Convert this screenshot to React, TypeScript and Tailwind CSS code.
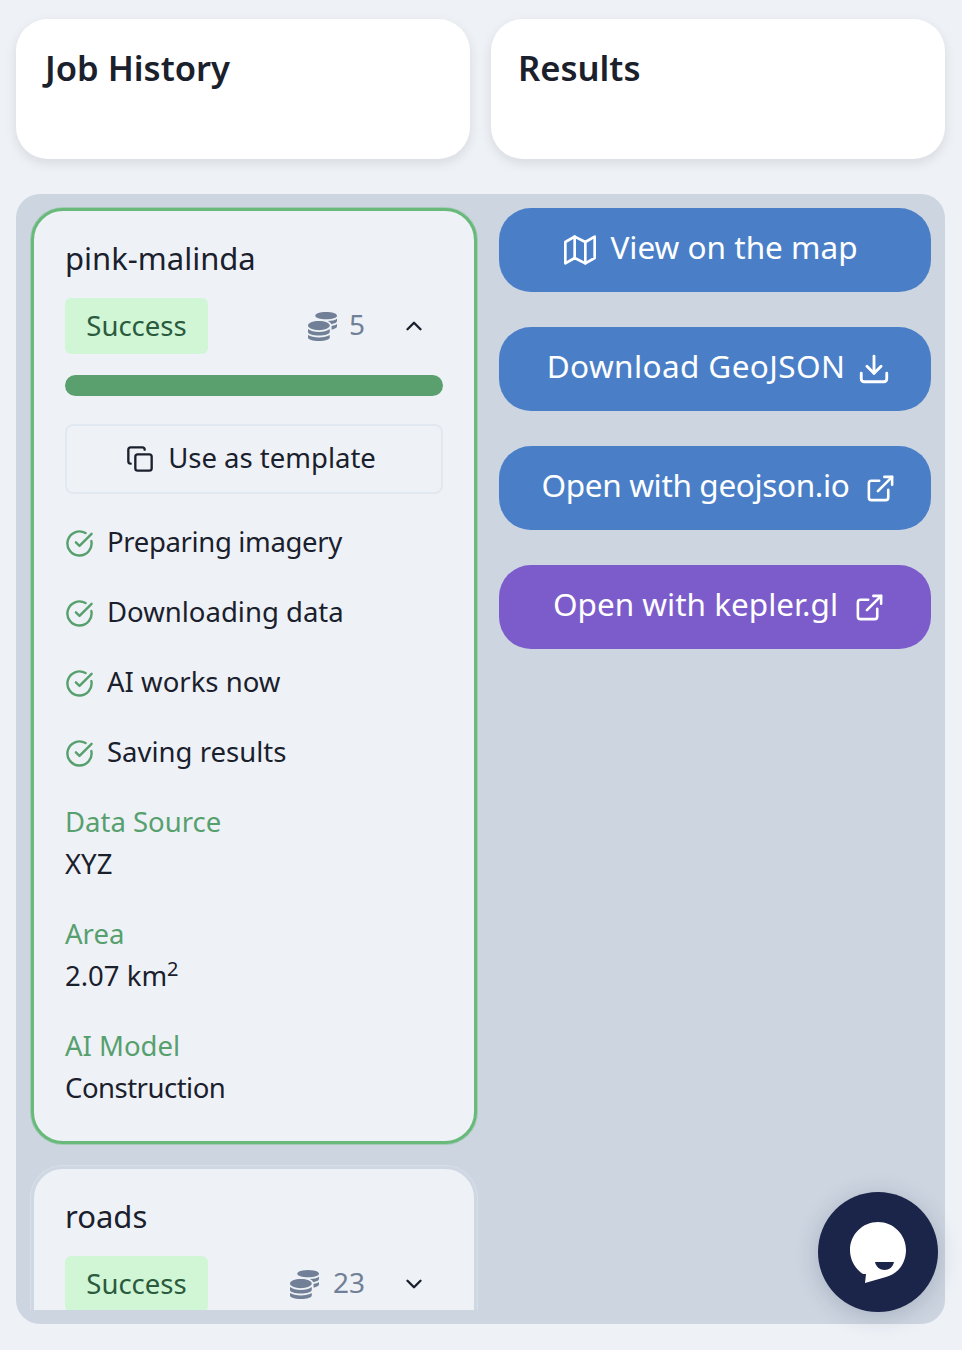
import { ChevronDown, ChevronUp, CircleCheckBig, Copy, Download, ExternalLink } from "lucide-react";
import { FaCoins } from "react-icons/fa";
import { FiMap } from "react-icons/fi";

const font = { fontFamily: '"Noto Sans", sans-serif' };

function Meta({ count, open }: { count: number; open: boolean }) {
  return (
    <div className="flex items-center justify-between">
      <span className="flex h-14 w-[143px] items-center justify-center rounded-[6px] bg-[#d0f6d6] text-[27.5px] text-[#2b5a3c]">Success</span>
      <div className="flex items-center">
        <FaCoins className="h-[29px] w-[29px] text-[#718096]" />
        <span className={`-mt-1 text-[28px] text-[#718096] ${count > 9 ? "ml-[14px]" : "ml-3"}`}>{count}</span>
        <span className="mr-[14px] ml-[34px] flex w-[30px] shrink-0 justify-center text-[#1a202c]">
          {open ? <ChevronUp size={26} strokeWidth={2.2} /> : <ChevronDown size={26} strokeWidth={2.2} />}
        </span>
      </div>
    </div>
  );
}

function Step({ label, tight }: { label: string; tight?: boolean }) {
  return (
    <div className="flex h-[70px] items-center gap-[13px]">
      <CircleCheckBig size={29} strokeWidth={2} className="text-[#57a06e]" />
      <span className={`-mt-0.5 text-[27.5px] text-[#1a202c] ${tight ? "tracking-[-0.35px]" : ""}`}>{label}</span>
    </div>
  );
}

function Info({ label, children }: { label: string; children: React.ReactNode }) {
  return (
    <div className="text-[27.5px] leading-[42px]">
      <div className="text-[#57a06e]">{label}</div>
      <div className="text-[#1a202c]">{children}</div>
    </div>
  );
}

function Action({ children, color = "bg-[#4a7fc8]", extra = "gap-3 pl-2" }: { children: React.ReactNode; color?: string; extra?: string }) {
  return (
    <button className={`flex h-[84px] w-full items-center justify-center rounded-[32px] text-[31.5px] text-white ${extra} ${color}`}>
      {children}
    </button>
  );
}

function Label({ children, className = "" }: { children: React.ReactNode; className?: string }) {
  return <span className={`-mt-1.5 ${className}`}>{children}</span>;
}

export default function App() {
  return (
    <div style={font} className="flex h-[1350px] w-[962px] flex-col overflow-hidden bg-[#eef2f7] px-4 pt-[19px]">
      <div className="flex gap-[21px] pr-[1px]">
        <div className="h-[140px] flex-1 rounded-[32px] bg-white px-[27px] py-[23px] shadow-[0_4px_12px_rgba(0,0,0,0.1)]">
          <h2 className="-mt-px pl-0.5 text-[34.6px] leading-[54px] font-semibold text-[#1a202c]">Job History</h2>
        </div>
        <div className="h-[140px] flex-1 rounded-[32px] bg-white px-[27px] py-[23px] shadow-[0_4px_12px_rgba(0,0,0,0.1)]">
          <h2 className="-mt-px text-[34.6px] leading-[54px] font-semibold text-[#1a202c]">Results</h2>
        </div>
      </div>

      <div className="relative mt-[35px] mr-[1px] flex h-[1130px] gap-[22px] rounded-[24px] bg-[#cdd5e0] pt-[14px] pr-[14px] pb-[14px] pl-[15px]">
        <div className="-mx-px -mt-px flex w-[448px] shrink-0 flex-col gap-[22px] overflow-hidden px-px pt-px">
          <div className="shrink-0 rounded-[32px] border-[3px] border-[#68b97a] bg-[#eef2f7] px-[31px] pt-6 pb-8 shadow-[0_0_0_1px_rgba(104,185,122,0.4)]">
            <div className="pb-[2px] text-[31px] leading-[46px] text-[#1a202c]">pink-malinda</div>
            <div className="mt-[15px]"><Meta count={5} open /></div>
            <div className="mt-[21px] h-[21px] rounded-full bg-[#5aa06f]" />
            <button className="mt-7 flex h-[70px] w-full items-center justify-center gap-[14px] rounded-lg border-2 border-[#e2e8f0] pr-[6px] text-[27.5px] text-[#1a202c]">
              <Copy size={28} strokeWidth={2} />
              <span className="-mt-0.5">Use as template</span>
            </button>
            <div className="mt-[14px]">
              <Step label="Preparing imagery" tight />
              <Step label="Downloading data" />
              <Step label="AI works now" />
              <Step label="Saving results" />
            </div>
            <div className="mt-[13px] flex flex-col gap-7">
              <Info label="Data Source">XYZ</Info>
              <Info label="Area">2.07 km<sup className="text-[20px]">2</sup></Info>
              <Info label="AI Model"><span className="tracking-[-0.5px]">Construction</span></Info>
            </div>
          </div>
          <div className="shrink-0 rounded-[32px] border-[3px] border-[#cfd7e2] bg-[#eef2f7] px-[31px] pt-6 pb-8 shadow-[0_0_0_1px_#d8dfe8]">
            <div className="pb-[2px] text-[31px] leading-[46px] text-[#1a202c]">roads</div>
            <div className="mt-[15px]"><Meta count={23} open={false} /></div>
          </div>
        </div>

        <div className="flex flex-1 flex-col gap-[35px]">
          <Action extra="gap-[14px] pr-2"><FiMap size={32} /><Label>View on the map</Label></Action>
          <Action><Label className="tracking-[0.4px]">Download GeoJSON</Label><Download size={34} strokeWidth={2} /></Action>
          <Action extra="gap-4 pl-2"><Label className="tracking-[-0.35px]">Open with geojson.io</Label><ExternalLink size={31} strokeWidth={2} /></Action>
          <Action extra="gap-4 pl-2" color="bg-[#7c5ccb]"><Label>Open with kepler.gl</Label><ExternalLink size={31} strokeWidth={2} /></Action>
        </div>

        <div className="absolute top-[998px] left-[802px] flex h-[120px] w-[120px] items-center justify-center rounded-full bg-[#1b2449] shadow-[0_4px_24px_rgba(26,35,73,0.2)]">
          <svg width="60" height="64" viewBox="0 0 60 64">
            <path d="M30 2C14.5 2 2 14.5 2 30c0 10.5 5.500 19 13 24l3 0-1 9 c7-2 14-4 21-6 C50 54 58 43 58 30 58 14.500 45.500 2 30 2Z" fill="#fff" />
            <path d="M27 42h19c-1 5-5 8-9.500 8S28 47 27 42Z" fill="#1b2449" />
          </svg>
        </div>
      </div>
    </div>
  );
}
